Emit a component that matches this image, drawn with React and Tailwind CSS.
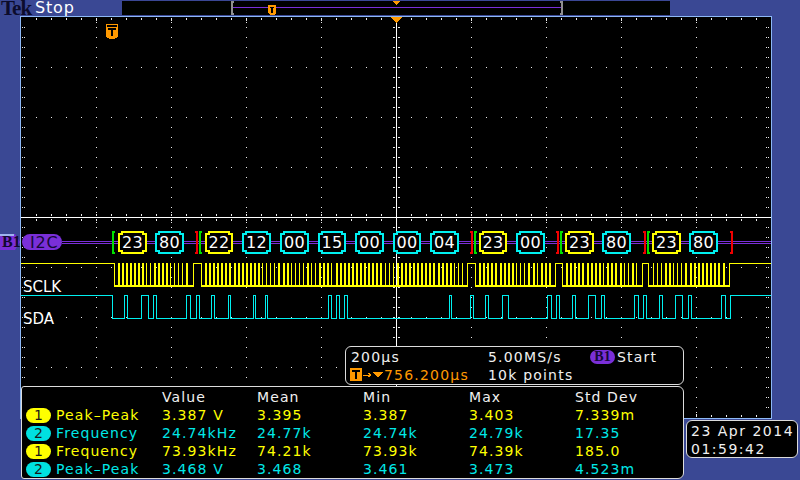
import React from "react";

const range = (a, b, s = 1) => { const o = []; for (let v = a; v <= b; v += s) o.push(v); return o; };
const YEL = "#ffff00";
const CYA = "#00f0f0";
const PUR = "#7a2fd8";
const ORG = "#ff9900";

const frames = [
  { s: 114, e: 193, f: 118, n: 18, p: 4, thin: [7, 8, 13, 14, 15, 16] },
  { s: 201, e: 467, f: 205, n: 64, p: 4.08, thin: [14, 15, 16, 17, 21, 22, 23, 24, 26, 27, 31, 44, 45, 46, 61, 62, 63] },
  { s: 475, e: 555, f: 479, n: 18, p: 4.12, thin: [9, 10, 11, 14] },
  { s: 562, e: 642, f: 566, n: 18, p: 4.12, thin: [9, 14, 15, 17] },
  { s: 648, e: 729, f: 652.5, n: 18, p: 4.12, thin: [0, 1, 2, 5, 6, 7] },
];

const cyanEdges = [112, 124, 127, 141, 148, 153, 156, 186, 190, 196, 199, 211, 214, 228, 230, 253, 255, 265, 267, 328, 331, 336, 339, 344, 347, 449, 451, 470, 473, 485, 488, 502, 508, 547, 551, 556, 559, 572, 575, 588, 595, 601, 604, 634, 638, 643, 646, 659, 662, 675, 682, 688, 691, 721, 725, 730];

function cyanPath() {
  let d = "M21 295.5";
  let hi = true;
  for (const x of cyanEdges) {
    const y = hi ? 318.5 : 295.5;
    d += ` H${x + 0.5} V${y}`;
    hi = !hi;
  }
  return d + " H771";
}

function yellowHigh() {
  let d = "M21 263.5";
  frames.forEach((f) => {
    d += ` H${f.s + 0.5} V286`;
    d += ` M${f.e + 0.5} 286 V263.5`;
  });
  return d + " H771";
}

const boxes = [
  [119, 146, "23", YEL], [156, 183, "80", CYA], [206, 232, "22", YEL], [243, 270, "12", CYA],
  [281, 308, "00", CYA], [319, 345, "15", CYA], [356, 383, "00", CYA], [394, 420, "00", CYA],
  [431, 458, "04", CYA], [480, 506, "23", YEL], [517, 544, "00", CYA], [566, 593, "23", YEL],
  [603, 630, "80", CYA], [653, 680, "23", YEL], [690, 717, "80", CYA],
];
const greens = [112, 199, 474, 560, 647];
const reds = [195, 470, 556, 643, 730];

function Grid() {
  const c = "#e8e8e8";
  const dots = [];
  const d = (x, y) => dots.push(<rect key={dots.length} x={x} y={y} width="1" height="1" fill={c} />);
  range(36, 756, 15).forEach((x) => { d(x, 18); d(x, 19); d(x, 415); d(x, 416); d(x, 214); d(x, 215); d(x, 219); d(x, 220); });
  range(96, 696, 75).forEach((x) => {
    range(27, 407, 10).forEach((y) => d(x, y));
    [18, 20, 22, 412, 414, 416, 212, 222].forEach((y) => d(x, y));
  });
  range(67, 367, 50).forEach((y) => {
    if (y !== 217) range(36, 756, 15).forEach((x) => d(x, y));
  });
  range(27, 407, 10).forEach((y) => { d(22, y); d(24, y); d(766, y); d(768, y); d(393, y); d(394, y); d(398, y); d(399, y); });
  return <g>{dots}</g>;
}

function Scope() {
  return (
    <svg width="750" height="401" viewBox="21 17 750 401" className="block" shapeRendering="crispEdges">
      <Grid />
      <rect x="21" y="217" width="750" height="1" fill="#fff" />
      <rect x="396" y="17" width="1" height="401" fill="#fff" />
      <polygon points="391,17 402,17 396.5,23" fill={ORG} />
      {/* trigger marker */}
      <path d="M106 24H118V37L114 39H110L106 37Z" fill={ORG} />
      <rect x="107" y="25" width="10" height="2" fill="#000" />
      <path d="M108 28H116V30H113V36H111V30H108Z" fill="#000" />
      {/* bus */}
      <rect x="62" y="241" width="709" height="1" fill={PUR} />
      <rect x="62" y="243" width="709" height="1" fill={PUR} />
      <rect x="22" y="234" width="40" height="16" rx="8" fill={PUR} shapeRendering="auto" />
      <text x="30" y="248" fontFamily="'DejaVu Sans', sans-serif" fontSize="16" letterSpacing="0.8" fill="#160838">I2C</text>
      {greens.map((x) => (
        <path key={x} d={`M${x + 3} 232H${x + 1}V253H${x + 3}`} fill="none" stroke="#00e000" strokeWidth="2" />
      ))}
      {reds.map((x) => (
        <path key={x} d={`M${x} 232H${x + 2}V253H${x}`} fill="none" stroke="#f00000" strokeWidth="2" />
      ))}
      {boxes.map(([a, b, t, col]) => (
        <g key={a}>
          <path d={`M${a + 3} 232H${b - 3}V234H${b}V251H${b - 3}V253H${a + 3}V251H${a}V234H${a + 3}Z`} fill="#000" stroke={col} strokeWidth="2" />
          <text x={(a + b) / 2} y="248" textAnchor="middle" fontFamily="'DejaVu Sans', sans-serif" fontSize="16" letterSpacing="0.4" fill="#fff">{t}</text>
        </g>
      ))}
      {/* SCLK */}
      {frames.map((f) => (
        <g key={f.s}>
          <rect x={f.s} y="285" width={f.e - f.s + 1} height="2" fill={YEL} />
          {range(0, f.n - 1).map((i) => (
            <rect key={i} x={Math.round(f.f + i * f.p)} y="263" width={f.thin.includes(i) ? 1 : 2} height="23" fill={YEL} />
          ))}
        </g>
      ))}
      <path d={yellowHigh()} fill="none" stroke={YEL} strokeWidth="1" />
      <path d={cyanPath()} fill="none" stroke={CYA} strokeWidth="1" />
      <text x="23" y="292" fontFamily="'DejaVu Sans', sans-serif" fontSize="15" fill="#fff">SCLK</text>
      <text x="23" y="324" fontFamily="'DejaVu Sans', sans-serif" fontSize="15" fill="#fff">SDA</text>
    </svg>
  );
}

function Pill({ n, bg }) {
  return (
    <span className="flex h-[15px] w-[25px] items-center justify-center rounded-full text-[14px] leading-none tracking-normal text-[#181818]" style={{ background: bg }}>
      {n}
    </span>
  );
}

const rows = [
  ["1", "Peak–Peak", "3.387 V", "3.395", "3.387", "3.403", "7.339m", "y"],
  ["2", "Frequency", "24.74kHz", "24.77k", "24.74k", "24.79k", "17.35", "c"],
  ["1", "Frequency", "73.93kHz", "74.21k", "73.93k", "74.39k", "185.0", "y"],
  ["2", "Peak–Peak", "3.468 V", "3.468", "3.461", "3.473", "4.523m", "c"],
];
const gridCols = "grid grid-cols-[30px_106px_95px_106px_106px_106px_1fr] items-center";

function Measurements() {
  return (
    <div className="absolute left-[21px] top-[386px] h-[93px] w-[663px] rounded-r-[6px] rounded-l-[3px] border border-[#dcdcdc] bg-black pl-[4px] pt-[1px] text-[14px] leading-none tracking-[1.1px]">
      <div className={`${gridCols} h-[18px] text-[#f0f0f0]`}>
        <span /><span /><span>Value</span><span>Mean</span><span>Min</span><span>Max</span><span>Std Dev</span>
      </div>
      {rows.map((r, i) => (
        <div key={i} className={`${gridCols} h-[18px] ${r[7] === "y" ? "text-[#ffff00]" : "text-[#00e8e8]"}`}>
          <Pill n={r[0]} bg={r[7] === "y" ? "#ffff00" : "#00e0e0"} />
          {r.slice(1, 7).map((v, j) => <span key={j}>{v}</span>)}
        </div>
      ))}
    </div>
  );
}

function Settings() {
  return (
    <div className="absolute left-[345px] top-[346px] h-[39px] w-[339px] rounded-[6px] border border-[#dcdcdc] bg-black pl-[3px] pt-[1px] text-[14px] leading-none tracking-[1.2px] text-[#f0f0f0]">
      <div className="grid h-[18px] grid-cols-[139px_102px_1fr] items-center">
        <span className="pl-[2px]">200µs</span>
        <span>5.00MS/s</span>
        <span className="flex items-center gap-[2px]">
          <span className="flex h-[14px] w-[25px] items-center justify-center rounded-full bg-[#7a2fd8] font-['Liberation_Serif',serif] text-[14px] font-bold tracking-normal text-[#160838]">B1</span>
          Start
        </span>
      </div>
      <div className="grid h-[18px] grid-cols-[139px_1fr] items-center">
        <span className="flex items-center text-[#ff9900]">
          <svg width="35" height="14" viewBox="0 0 35 14" className="shrink-0" shapeRendering="crispEdges">
            <rect x="1" y="0" width="12" height="13" fill="#ff9900" />
            <path d="M3 2H11V4H8V11H6V4H3Z" fill="#000" />
            <path d="M14 7H21M19 5L22 7L19 9" fill="none" stroke="#ff9900" strokeWidth="1" />
            <polygon points="24,4 34,4 29,10" fill="#ff9900" />
          </svg>
          756.200µs
        </span>
        <span>10k points</span>
      </div>
    </div>
  );
}

function DateBox() {
  return (
    <div className="absolute left-[686px] top-[420px] h-[38px] w-[112px] rounded-[6px] border border-[#dcdcdc] bg-black pl-[4px] pt-[1px] text-[14px] leading-[18px] tracking-[1.5px] text-[#f0f0f0]">
      <div>23 Apr 2014</div>
      <div>01:59:42</div>
    </div>
  );
}

export default function App() {
  return (
    <div className="relative h-[480px] w-[800px] overflow-hidden bg-[#3a4894] font-['DejaVu_Sans',sans-serif]">
      <div className="flex h-[16px]">
        <div className="flex w-[122px] items-center">
          <span className="ml-[1px] font-['Liberation_Serif',serif] text-[21px] font-bold leading-[16px] tracking-[-1px] text-[#0c0c2c]">Tek</span>
          <span className="ml-[4px] text-[16px] leading-[16px] tracking-[0.8px] text-white">Stop</span>
        </div>
        <div className="mt-[1px] h-[14px] w-[548px] bg-[#000300]">
          <svg width="548" height="14" viewBox="122 1 548 14" className="block" shapeRendering="crispEdges">
            <rect x="231" y="1" width="332" height="14" fill="#000" />
            <rect x="233" y="7" width="328" height="1" fill={PUR} />
            <path d="M234 2H232V14H234M560 2H562V14H560" fill="none" stroke="#909090" strokeWidth="2" />
            <polygon points="393,1 400,1 396.5,5" fill={ORG} />
            <path d="M268 5H276V13L274 15H270L268 13Z" fill={ORG} />
            <path d="M270 7H274V8H272.8V13H271.2V8H270Z" fill="#000" />
          </svg>
        </div>
      </div>
      <div className="ml-[20px] h-[403px] w-[752px] border border-[#8db8f5] bg-black">
        <Scope />
      </div>
      <div className="absolute left-0 top-[234px]">
        <svg width="21" height="16" viewBox="0 0 21 16" className="block">
          <polygon points="0,0 15,0 20,8 15,16 0,16" fill={PUR} />
          <rect x="0" y="0" width="14" height="2" fill="#9fb4f0" />
        </svg>
      </div>
      <span className="absolute left-[2px] top-[234px] font-['Liberation_Serif',serif] text-[16px] font-bold leading-[16px] text-[#120830]">B1</span>
      <Settings />
      <Measurements />
      <DateBox />
    </div>
  );
}
